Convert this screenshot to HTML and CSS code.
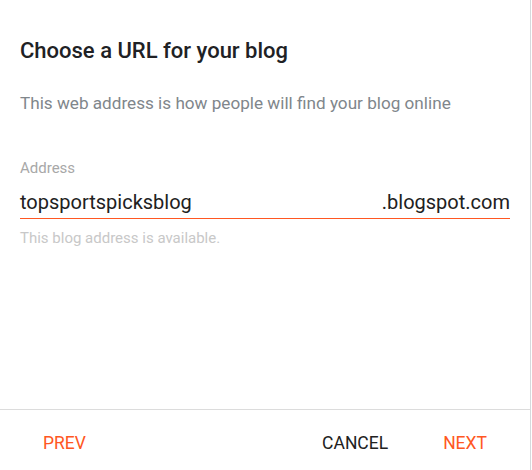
FILE: index.html
```html
<!DOCTYPE html>
<html>
	<head>
		<meta charset="UTF-8">
		<title>Choose a URL for your blog</title>
		<link rel="stylesheet" href="styles.css">
	</head>
	<body>
	<div class="dialog">
	    <div class="content">
	        <h2 class="title">Choose a URL for your blog</h2>
	        <p class="desc">This web address is how people will find your blog online</p>

	        <div class="field">
	            <label class="label">Address</label>
	            <div class="input-row">
	                <span class="value">topsportspicksblog</span>
	                <span class="suffix">.blogspot.com</span>
	            </div>
	            <div class="hint">This blog address is available.</div>
	        </div>
	    </div>

	    <div class="footer">
	        <a class="btn accent" href="javascript:;">PREV</a>
	        <div class="right">
	            <a class="btn" href="javascript:;">CANCEL</a>
	            <a class="btn accent" href="javascript:;">NEXT</a>
	        </div>
	    </div>
	</div>
	</body>
</html>
```

FILE: styles.css
```css
body{
    margin:0;
    background:#fff;
    font-family:Roboto,"Liberation Sans",sans-serif;
}
.dialog{
    width:531px;
    height:470px;
    box-sizing:border-box;
    border-right:1px solid #d6d9dc;
    display:flex;
    flex-direction:column;
}
.content{
    flex:1;
    padding:37px 20px 0;
}
.title{
    margin:0;
    font-size:22px;
    line-height:28px;
    font-weight:500;
    color:#202124;
}
.desc{
    margin:26px 0 0;
    font-size:17.15px;
    line-height:24px;
    color:#80868b;
}
.field{
    margin-top:43px;
}
.label{
    display:block;
    font-size:15px;
    line-height:20px;
    color:#a8a8a8;
}
.input-row{
    display:flex;
    justify-content:space-between;
    align-items:center;
    height:32px;
    margin-top:8px;
    border-bottom:1px solid #ff5722;
    font-size:20px;
    color:#212121;
}
.hint{
    margin-top:10px;
    font-size:15px;
    line-height:18px;
    color:#c8c8c8;
}
.footer{
    height:61px;
    box-sizing:border-box;
    border-top:1px solid #dcdcdc;
    display:flex;
    justify-content:space-between;
    align-items:center;
    padding:6px 19px 0;
}
.right{
    display:flex;
    gap:7px;
}
.btn{
    padding:0 24px;
    font-size:17.5px;
    color:#212121;
    text-decoration:none;
}
.btn.accent{
    color:#ff5722;
}
```
